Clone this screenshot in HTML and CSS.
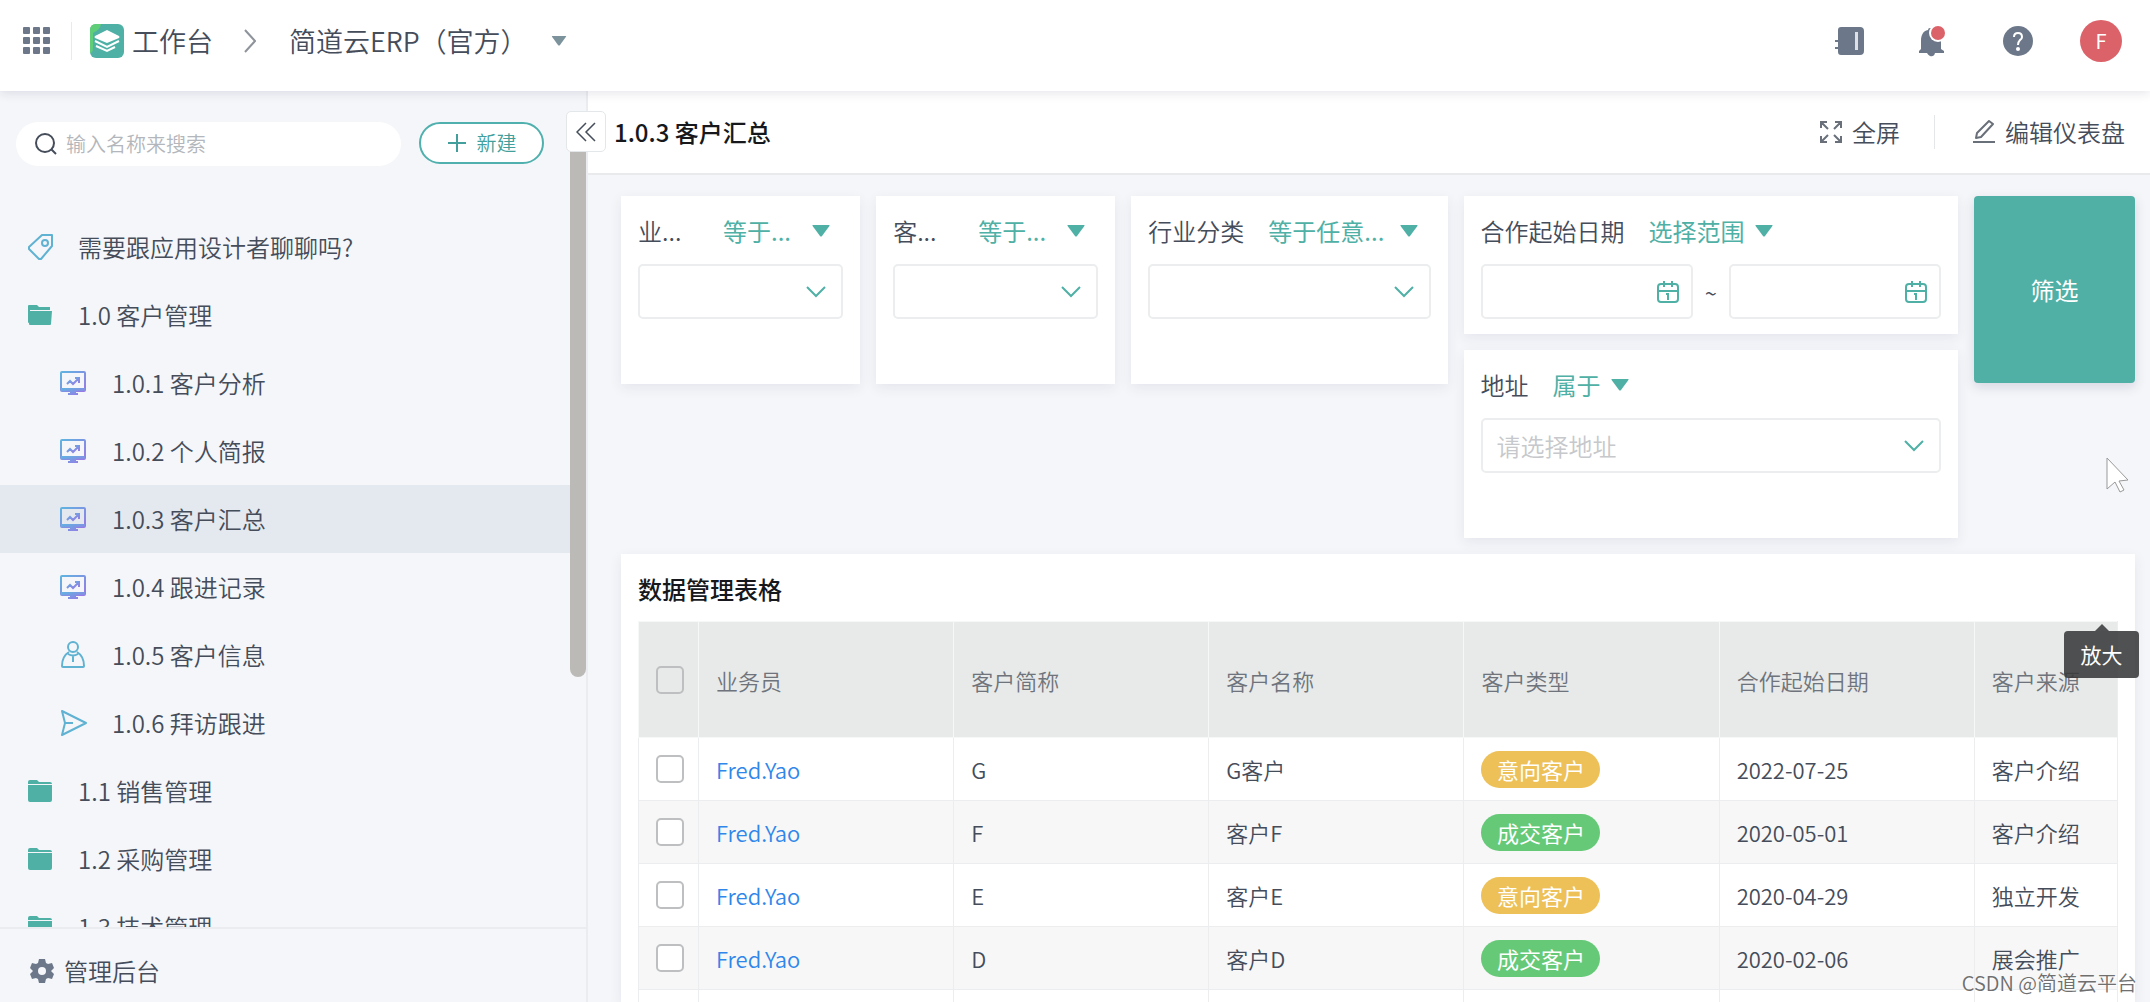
FILE: index.html
```html
<!DOCTYPE html>
<html lang="zh-CN">
<head>
<meta charset="utf-8">
<meta name="viewport" content="width=device-width, initial-scale=1">
<title>简道云ERP</title>
<link rel="stylesheet" href="styles.css">
</head>
<body>
<svg class="sprite" aria-hidden="true">
  <defs>
    <linearGradient id="screen-tint" x1="0" y1="0" x2="1" y2="1"><stop offset="0" stop-color="#5fb4e0"/><stop offset="1" stop-color="#9a78e6"/></linearGradient>
    <symbol id="i-caret" viewBox="0 0 18 12"><path d="M1 0h16q1 0 .4 1L10 11q-1 1-2 0L.6 1Q0 0 1 0z" fill="currentColor"/></symbol>
    <symbol id="i-chevron" viewBox="0 0 20 12"><path d="M1 1l9 9 9-9" fill="none" stroke="currentColor" stroke-width="2"/></symbol>
    <symbol id="i-calendar" viewBox="0 0 22 24"><g fill="none" stroke="currentColor" stroke-width="2"><rect x="1" y="4" width="20" height="18" rx="3"/><path d="M1 11h20M7 1v6M15 1v6M9 14h2v6"/></g></symbol>
    <symbol id="i-screen" viewBox="0 0 26 26"><g fill="none" stroke="url(#screen-tint)" stroke-width="2"><rect x="1" y="2" width="24" height="19" rx="1"/><path d="M7 14l3-3 3 3 5-5M15 8h4v5"/></g><path d="M1 18h24v3H1zM10 21h6v2h2v2H8v-2h2z" fill="url(#screen-tint)"/></symbol>
    <symbol id="i-folder" viewBox="0 0 24 22"><path d="M2 0h7l2 2h11q2 0 2 2H0V2q0-2 2-2zM0 5h24v15q0 2-2 2H2q-2 0-2-2z" fill="currentColor"/></symbol>
    <symbol id="i-folder-open" viewBox="0 0 24 22"><path d="M1 1h8l2 2h11v3H2v12L0 19V2q0-1 1-1zM2 7h22l-1 13q0 1-1 1H2q-1 0-1-1z" fill="currentColor"/></symbol>
    <symbol id="i-tag" viewBox="0 0 26 26"><g fill="none" stroke="currentColor" stroke-width="2"><path d="M14 1h10v11L13 25h-2L1 15v-2z" stroke-linejoin="round"/><circle cx="17" cy="9" r="3"/></g></symbol>
    <symbol id="i-person" viewBox="0 0 26 28"><g fill="none" stroke="currentColor" stroke-width="2"><circle cx="13" cy="6" r="5"/><path d="M9 11C4 14 2 18 2 25q0 1 1 1h20q1 0 1-1c0-7-2-11-7-14M8 13q5 3 10 0M13 14v7"/></g></symbol>
    <symbol id="i-send" viewBox="0 0 28 28"><path d="M2 2l24 12L2 26l3-12zM5 14h8" fill="none" stroke="currentColor" stroke-width="2" stroke-linejoin="round"/></symbol>
  </defs>
</svg>

<header class="topbar">
  <button class="icon-btn" aria-label="应用">
    <svg width="28" height="28" viewBox="0 0 28 28" fill="currentColor"><rect x="0" y="0" width="7" height="7" rx="1"/><rect x="10" y="0" width="7" height="7" rx="1"/><rect x="20" y="0" width="7" height="7" rx="1"/><rect x="0" y="10" width="7" height="7" rx="1"/><rect x="10" y="10" width="7" height="7" rx="1"/><rect x="20" y="10" width="7" height="7" rx="1"/><rect x="0" y="20" width="7" height="7" rx="1"/><rect x="10" y="20" width="7" height="7" rx="1"/><rect x="20" y="20" width="7" height="7" rx="1"/></svg>
  </button>
  <span class="topbar-divider"></span>
  <a class="workbench" href="#">
    <svg width="34" height="34" viewBox="0 0 34 34"><rect width="34" height="34" rx="6" fill="#4fb0a6"/><path d="M6 0h5q-1 6-8 9v14q0 6-3 6V6q0-6 6-6z" fill="#60cd78"/><path d="M17 6l12 6q1 1 0 2l-12 5-12-5q-1-1 0-2z" fill="#fff"/><path d="M5 17l12 6 12-6M6 22l11 5 8-4" fill="none" stroke="#fff" stroke-width="2"/></svg>
    <span>工作台</span>
  </a>
  <svg class="crumb-arrow" width="12" height="24" viewBox="0 0 12 24"><path d="M1 1l10 11L1 23" fill="none" stroke="currentColor" stroke-width="2"/></svg>
  <button class="app-name">
    <span>简道云ERP（官方）</span>
    <svg class="app-caret" width="16" height="10"><use href="#i-caret"/></svg>
  </button>
  <nav class="tools">
    <button class="icon-btn" aria-label="通讯录"><svg width="30" height="30" viewBox="0 0 30 30"><path d="M6 1h19q4 0 4 4v20q0 4-4 4H6q-3 0-3-3v-3H0v-2h3v-5H0v-2h3v-5H0V9h3V4q0-3 3-3z" fill="currentColor"/><rect x="20" y="6" width="3" height="18" fill="#dde1e6"/></svg></button>
    <button class="icon-btn" aria-label="消息"><svg width="30" height="32" viewBox="0 0 30 32"><path d="M11 3q2 0 2 2c7 1 9 5 9 11v8l3 2v2h-9q-1 4-5 3-2-1-3-3H0v-2l2-2v-8C2 10 4 6 9 5q0-2 2-2z" fill="currentColor"/><circle cx="19" cy="8" r="9" fill="#fff"/><circle cx="19" cy="8" r="7" fill="#dc6269"/></svg></button>
    <button class="icon-btn" aria-label="帮助"><svg width="30" height="30" viewBox="0 0 30 30"><circle cx="15" cy="15" r="15" fill="currentColor"/><path d="M11 11q0-4 4-4t4 4q0 2-2 3-2 2-2 5" fill="none" stroke="#fff" stroke-width="2"/><circle cx="15" cy="23" r="2" fill="#fff"/></svg></button>
    <button class="avatar">F</button>
  </nav>
</header>

<div class="shell">
  <aside class="sidebar">
    <div class="sidebar-head">
      <label class="search">
        <svg width="24" height="24" viewBox="0 0 24 24" fill="none" stroke="currentColor" stroke-width="2"><circle cx="11" cy="11" r="9"/><path d="M17 17l5 5"/></svg>
        <input type="text" placeholder="输入名称来搜索" aria-label="搜索">
      </label>
      <button class="new-btn"><svg width="20" height="20" viewBox="0 0 20 20"><path d="M10 1v18M1 10h18" stroke="currentColor" stroke-width="2"/></svg>新建</button>
    </div>
    <nav class="menu">
      <a class="item" href="#"><svg class="blue" width="26" height="26"><use href="#i-tag"/></svg>需要跟应用设计者聊聊吗?</a>
      <a class="item" href="#"><svg class="teal" width="24" height="22"><use href="#i-folder-open"/></svg>1.0 客户管理</a>
      <a class="item sub" href="#"><svg width="26" height="26"><use href="#i-screen"/></svg>1.0.1 客户分析</a>
      <a class="item sub" href="#"><svg width="26" height="26"><use href="#i-screen"/></svg>1.0.2 个人简报</a>
      <a class="item sub active" href="#"><svg width="26" height="26"><use href="#i-screen"/></svg>1.0.3 客户汇总</a>
      <a class="item sub" href="#"><svg width="26" height="26"><use href="#i-screen"/></svg>1.0.4 跟进记录</a>
      <a class="item sub" href="#"><svg class="blue" width="26" height="28"><use href="#i-person"/></svg>1.0.5 客户信息</a>
      <a class="item sub" href="#"><svg class="blue" width="28" height="28"><use href="#i-send"/></svg>1.0.6 拜访跟进</a>
      <a class="item" href="#"><svg class="teal" width="24" height="22"><use href="#i-folder"/></svg>1.1 销售管理</a>
      <a class="item" href="#"><svg class="teal" width="24" height="22"><use href="#i-folder"/></svg>1.2 采购管理</a>
      <a class="item" href="#"><svg class="teal" width="24" height="22"><use href="#i-folder"/></svg>1.3 技术管理</a>
    </nav>
    <a class="sidebar-foot" href="#"><svg width="24" height="26" viewBox="0 0 24 24"><path d="M9 0h6l1 4 2 1 4-1 2 5-3 3 3 3-2 5-4-1-2 1-1 4H9l-1-4-2-1-4 1-2-5 3-3-3-3 2-5 4 1 2-1z" fill="currentColor"/><circle cx="12" cy="12" r="4" fill="#f4f6f9"/></svg>管理后台</a>
    <span class="scroll-thumb"></span>
    <button class="collapse" aria-label="收起"><svg width="20" height="20" viewBox="0 0 20 20"><path d="M10 1l-9 9 9 9M19 1l-9 9 9 9" fill="none" stroke="currentColor" stroke-width="1.5"/></svg></button>
  </aside>

  <main class="main">
    <div class="page-head">
      <h1>1.0.3 客户汇总</h1>
      <div class="page-actions">
        <button class="text-btn"><svg width="22" height="22" viewBox="0 0 22 22" fill="none" stroke="currentColor" stroke-width="2"><path d="M1 7V1h6M1 1l7 7M15 1h6v6M21 1l-7 7M1 15v6h6M1 21l7-7M21 15v6h-6M21 21l-7-7"/></svg>全屏</button>
        <span class="action-divider"></span>
        <button class="text-btn"><svg width="22" height="24" viewBox="0 0 22 24" fill="none" stroke="currentColor" stroke-width="2"><path d="M3 18l1-5L16 1l4 3L8 17zM0 22h22" stroke-linejoin="round"/></svg>编辑仪表盘</button>
      </div>
    </div>

    <div class="board">
      <section class="filters">
        <div class="card tall">
          <div class="card-head"><span class="field-name">业...</span><button class="op fill"><span>等于...</span><svg width="18" height="12"><use href="#i-caret"/></svg></button></div>
          <div class="control"><select aria-label="业务员"><option></option></select><svg class="control-icon" width="20" height="12"><use href="#i-chevron"/></svg></div>
        </div>
        <div class="card tall">
          <div class="card-head"><span class="field-name">客...</span><button class="op fill"><span>等于...</span><svg width="18" height="12"><use href="#i-caret"/></svg></button></div>
          <div class="control"><select aria-label="客户"><option></option></select><svg class="control-icon" width="20" height="12"><use href="#i-chevron"/></svg></div>
        </div>
        <div class="card tall">
          <div class="card-head"><span class="field-name">行业分类</span><button class="op fill"><span>等于任意...</span><svg width="18" height="12"><use href="#i-caret"/></svg></button></div>
          <div class="control"><select aria-label="行业分类"><option></option></select><svg class="control-icon" width="20" height="12"><use href="#i-chevron"/></svg></div>
        </div>
        <div class="stack">
          <div class="card">
            <div class="card-head"><span class="field-name">合作起始日期</span><button class="op"><span>选择范围</span><svg width="18" height="12"><use href="#i-caret"/></svg></button></div>
            <div class="range">
              <div class="control"><input type="text" aria-label="开始日期"><svg class="control-icon" width="22" height="24"><use href="#i-calendar"/></svg></div>
              <span class="tilde">~</span>
              <div class="control"><input type="text" aria-label="结束日期"><svg class="control-icon" width="22" height="24"><use href="#i-calendar"/></svg></div>
            </div>
          </div>
          <div class="card tall">
            <div class="card-head"><span class="field-name short">地址</span><button class="op"><span>属于</span><svg width="18" height="12"><use href="#i-caret"/></svg></button></div>
            <div class="control"><select aria-label="地址"><option>请选择地址</option></select><svg class="control-icon" width="20" height="12"><use href="#i-chevron"/></svg></div>
          </div>
        </div>
        <button class="submit">筛选</button>
      </section>

      <section class="panel">
        <h2>数据管理表格</h2>
        <div class="table-wrap">
          <table>
            <colgroup><col class="c-check"><col><col><col><col><col><col></colgroup>
            <thead>
              <tr><th><input type="checkbox" aria-label="全选"></th><th>业务员</th><th>客户简称</th><th>客户名称</th><th>客户类型</th><th>合作起始日期</th><th>客户来源</th></tr>
            </thead>
            <tbody>
              <tr><td><input type="checkbox" aria-label="选择 G"></td><td><a href="#">Fred.Yao</a></td><td>G</td><td>G客户</td><td><span class="pill amber">意向客户</span></td><td>2022-07-25</td><td>客户介绍</td></tr>
              <tr><td><input type="checkbox" aria-label="选择 F"></td><td><a href="#">Fred.Yao</a></td><td>F</td><td>客户F</td><td><span class="pill green">成交客户</span></td><td>2020-05-01</td><td>客户介绍</td></tr>
              <tr><td><input type="checkbox" aria-label="选择 E"></td><td><a href="#">Fred.Yao</a></td><td>E</td><td>客户E</td><td><span class="pill amber">意向客户</span></td><td>2020-04-29</td><td>独立开发</td></tr>
              <tr><td><input type="checkbox" aria-label="选择 D"></td><td><a href="#">Fred.Yao</a></td><td>D</td><td>客户D</td><td><span class="pill green">成交客户</span></td><td>2020-02-06</td><td>展会推广</td></tr>
              <tr><td></td><td></td><td></td><td></td><td><span class="pill blue-pill"></span></td><td></td><td></td></tr>
            </tbody>
          </table>
        </div>
        <span class="tooltip" role="tooltip">放大</span>
      </section>
    </div>
  </main>
</div>

<svg class="cursor" width="24" height="36" viewBox="0 0 24 36"><path d="M1 1l21 22-9 1 5 9-4 2-5-10-8 7z" fill="#fff" stroke="#999" stroke-width="1"/></svg>
<span class="watermark">CSDN @简道云平台</span>
</body>
</html>
```
FILE: styles.css
```css
* { box-sizing: border-box; }

body {
  margin: 0;
  height: 100vh;
  display: flex;
  flex-direction: column;
  overflow: hidden;
  position: relative;
  background: #f4f6f9;
  color: #454c5a;
  font-family: "Noto Sans CJK SC", sans-serif;
  font-size: 24px;
  font-weight: 350;
  line-height: 36px;
}

button, input, select { font: inherit; color: inherit; margin: 0; }
button { border: 0; padding: 0; background: none; }
a { color: inherit; text-decoration: none; }
svg { display: block; flex: none; }
.sprite { position: absolute; width: 0; height: 0; }

/* Top bar */
.topbar {
  flex: none;
  height: 91px;
  padding: 0 28px 10px 23px;
  display: flex;
  align-items: center;
  background: #fff;
  box-shadow: 0 2px 10px rgba(40, 30, 80, .12);
  position: relative;
  z-index: 2;
  font-size: 27px;
}
.icon-btn { color: #6c7889; }
.topbar-divider { width: 1px; height: 38px; margin: 0 18px 0 20px; background: #e8eaec; }
.workbench { display: flex; align-items: center; gap: 8px; }
.crumb-arrow { margin: 0 33px 0 31px; color: #8f949c; }
.app-name { display: flex; align-items: center; gap: 23px; }
.app-caret { color: #7d939c; }
.tools { margin-left: auto; display: flex; align-items: center; gap: 54px; }
.avatar {
  width: 42px;
  height: 42px;
  margin-left: -7px;
  border-radius: 50%;
  background: #dc6269;
  color: #fff;
  font-size: 20px;
  font-weight: 400;
}

.shell { flex: 1; min-height: 0; display: flex; }

/* Sidebar */
.sidebar {
  flex: none;
  width: 588px;
  display: flex;
  flex-direction: column;
  border-right: 2px solid #eaecef;
  position: relative;
}
.sidebar-head {
  flex: none;
  height: 122px;
  padding: 31px 42px 0 16px;
  display: flex;
  align-items: flex-start;
  gap: 18px;
  font-size: 20px;
}
.search {
  flex: 1;
  height: 44px;
  padding: 0 18px;
  display: flex;
  align-items: center;
  gap: 8px;
  border-radius: 22px;
  background: #fff;
}
.search input { flex: 1; min-width: 0; border: 0; padding: 0; outline: 0; background: none; }
.search input::placeholder { color: #b3b6bb; opacity: 1; }
.new-btn {
  width: 125px;
  height: 42px;
  display: flex;
  align-items: center;
  justify-content: center;
  gap: 10px;
  border: 2px solid #4fb0ae;
  border-radius: 21px;
  background: #fff;
  color: #429f9c;
}
.menu { flex: 1; min-height: 0; overflow: hidden; margin-right: 15px; }
.item { height: 68px; padding-left: 28px; display: grid; grid-template-columns: 50px 1fr; align-items: center; }
.item.sub { padding-left: 60px; grid-template-columns: 52px 1fr; }
.item.active { background: #e4e8ef; }
.teal { color: #4fb0a6; }
.blue { color: #5fb2d2; }
.sidebar-foot {
  flex: none;
  height: 75px;
  padding: 10px 0 0 30px;
  display: flex;
  align-items: center;
  gap: 10px;
  border-top: 2px solid #eaecef;
}
.sidebar-foot svg { color: #6c7889; }
.scroll-thumb { position: absolute; top: 40px; right: 0; width: 16px; height: 546px; border-radius: 8px; background: #bbbab6; }
.collapse {
  position: absolute;
  top: 20px;
  right: -20px;
  z-index: 1;
  width: 40px;
  height: 41px;
  display: grid;
  place-items: center;
  border: 1px solid #e4e7e9;
  border-radius: 5px;
  background: #fff;
}

/* Page header */
.main { flex: 1; min-width: 0; display: flex; flex-direction: column; }
.page-head {
  flex: none;
  height: 84px;
  padding: 0 25px 0 26px;
  display: flex;
  align-items: center;
  justify-content: space-between;
  background: #fff;
  border-bottom: 2px solid #e8eaec;
}
h1, h2 { margin: 0; font-size: 24px; font-weight: 500; color: #16181c; }
.page-actions { display: flex; align-items: center; }
.text-btn { display: flex; align-items: center; gap: 10px; }
.text-btn svg { color: #6a7079; }
.action-divider { width: 1px; height: 34px; margin: 0 38px 0 34px; background: #e4e6e8; }

/* Filters */
.board { flex: 1; min-height: 0; padding: 21px 15px 0 33px; display: flex; flex-direction: column; gap: 16px; overflow: hidden; }
.filters {
  flex: none;
  display: grid;
  grid-template-columns: 239fr 239fr 316fr 494fr 161fr;
  gap: 16px;
  align-items: start;
}
.stack { display: grid; gap: 16px; }
.card { min-width: 0; padding: 17px 17px 15px; background: #fff; box-shadow: 0 4px 12px rgba(60, 50, 110, .08); }
.card.tall { padding-bottom: 65px; }
.card-head { display: flex; align-items: center; gap: 24px; margin-bottom: 15px; }
.field-name { min-width: 61px; white-space: nowrap; }
.field-name.short { min-width: 0; }
.op { display: flex; align-items: center; gap: 10px; color: #4fb0a6; font-weight: 400; white-space: nowrap; }
.op.fill { flex: 1; justify-content: space-between; padding-right: 13px; }
.control { flex: 1; min-width: 0; display: grid; align-items: center; }
.control > * { grid-area: 1 / 1; }
.control select, .control input {
  appearance: none;
  width: 100%;
  height: 55px;
  padding: 0 14px;
  border: 2px solid #ebedee;
  border-radius: 5px;
  background: #fff;
  color: #c6c8cb;
}
.control-icon { justify-self: end; margin-right: 14px; color: #4fb0a6; pointer-events: none; }
select + .control-icon { margin-right: 17px; }
.range { display: flex; align-items: center; }
.tilde { width: 36px; text-align: center; font-size: 22px; }
.submit {
  height: 187px;
  border-radius: 4px;
  background: #50b0a6;
  color: #fff;
  font-weight: 400;
  box-shadow: 0 4px 12px rgba(60, 50, 110, .16);
}

/* Data table */
.panel { flex: 1; min-height: 0; padding: 17px 17px 0; background: #fff; box-shadow: 0 4px 12px rgba(60, 50, 110, .08); position: relative; }
.panel h2 { margin-bottom: 14px; }
.table-wrap { overflow: hidden; border-right: 1px solid #eceeee; }
table { width: 1592px; table-layout: fixed; border-collapse: collapse; font-size: 22px; }
.c-check { width: 60px; }
th, td { height: 63px; padding: 0 17px; text-align: left; font-weight: 350; border: 1px solid #ebedee; white-space: nowrap; }
th { height: 116px; background: #e8eae9; color: #6f747c; border-color: #f6f7f7; }
tbody tr:nth-child(even) { background: #f7f7f7; }
td a { color: #2f87ea; }
td input, th input {
  appearance: none;
  display: block;
  width: 28px;
  height: 28px;
  border: 2px solid #bdbfc1;
  border-radius: 5px;
  background: #fff;
}
th input { background: none; }
.pill { display: block; width: 119px; height: 37px; border-radius: 19px; line-height: 37px; text-align: center; color: #fff; font-weight: 400; }
.amber { background: #edc058; }
.green { background: #66c978; }
.blue-pill { background: #62a5dc; }

.tooltip {
  position: absolute;
  top: 77px;
  right: -4px;
  width: 75px;
  height: 47px;
  border-radius: 4px;
  background: rgba(56, 57, 58, .88);
  color: #fff;
  font-size: 21px;
  font-weight: 400;
  line-height: 47px;
  text-align: center;
}
.tooltip::before {
  content: "";
  position: absolute;
  left: 31px;
  top: -7px;
  border: 7px solid transparent;
  border-top: 0;
  border-bottom-color: #505152;
}
.cursor { position: absolute; right: 20px; top: 457px; z-index: 3; }
.watermark {
  position: absolute;
  right: 13px;
  bottom: 5px;
  z-index: 3;
  font-size: 20px;
  line-height: 28px;
  color: #6f6f6f;
  text-shadow: 1px 1px 1px #fff;
}
```
